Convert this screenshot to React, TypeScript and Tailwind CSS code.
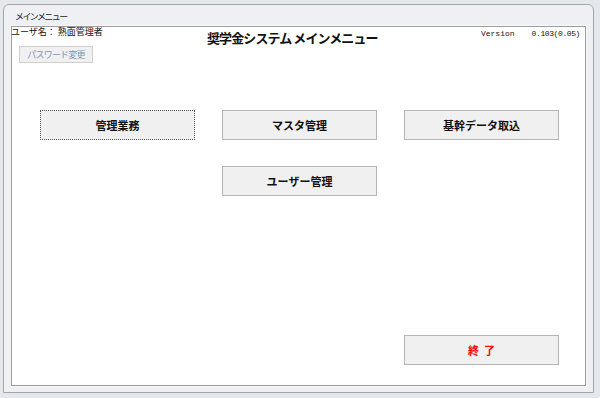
import React from "react";

const jp = "font-['Noto_Sans_CJK_JP','Noto_Sans',sans-serif]";

function Btn({ children, focused, red }: { children: React.ReactNode; focused?: boolean; red?: boolean }) {
  return (
    <button
      className={
        "h-[30px] w-[155px] flex items-center justify-center bg-[#f0f0f0] text-[11px] font-bold leading-none " +
        jp +
        (focused ? " border border-dotted border-[#555555]" : " border border-[#b4b4b4]") +
        (red ? " text-[#ff0000]" : " text-[#111111]")
      }
    >
      {children}
    </button>
  );
}

export default function App() {
  return (
    <div className="w-[600px] h-[398px] bg-[#e4e7eb] pl-[3px] pt-[4px] pr-[6px] pb-[5px]">
      <div className="h-full flex flex-col bg-[#eef0f3] border border-[#a3a6aa] rounded-t-[6px] px-[7px] pb-[6px]">
        <div className={"h-[21px] pl-[4px] pt-[7px] text-[9px] leading-none tracking-[-1.6px] text-[#222] " + jp}>
          メインメニュー
        </div>
        <div className="flex-1 bg-white border border-[#9c9c9c] shadow-[0_0_0_1px_#f8f9fa] flex flex-col">
          <div className="flex items-start">
            <div className="w-[195px] flex flex-col items-start">
              <div className={"ml-[-1px] text-[9px] leading-[10px] text-[#111] whitespace-pre " + jp}>ユーザ名： 熟面管理者</div>
              <div
                className={
                  "ml-[7px] mt-[9px] h-[17px] w-[74px] flex items-center justify-center bg-[#f0f0f0] border border-[#cfcfcf] text-[9px] leading-none tracking-[-0.8px] text-[#7d94b6] " +
                  jp
                }
              >
                パスワード変更
              </div>
            </div>
            <div className={"mt-[3px] text-[13px] font-bold leading-[16px] tracking-[-0.9px] text-[#111] whitespace-pre " + jp}>
              奨学金システム メインメニュー
            </div>
            <div className="ml-auto mt-[2px] mr-[5px] flex text-[8px] leading-[10px] text-[#111] font-['Liberation_Mono',monospace]">
              <span>Version</span>
              <span className="ml-[17px] tracking-[-0.4px]">0.103(0.05)</span>
            </div>
          </div>
          <div className="ml-[28px] mt-[47px] grid grid-cols-[155px_155px_155px] gap-x-[27px] gap-y-[26px]">
            <Btn focused>管理業務</Btn>
            <Btn>マスタ管理</Btn>
            <Btn>基幹データ取込</Btn>
            <div />
            <Btn>ユーザー管理</Btn>
            <div />
            <div />
            <div />
            <div className="mt-[113px]">
              <Btn red>
                <span className="whitespace-pre">終  了</span>
              </Btn>
            </div>
          </div>
        </div>
      </div>
    </div>
  );
}
